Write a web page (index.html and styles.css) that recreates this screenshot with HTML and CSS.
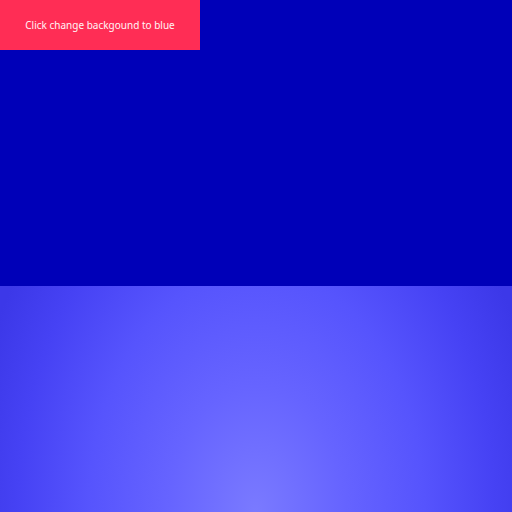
FILE: index.html
```html
<!DOCTYPE html>
<html>
<head>
<meta charset="utf-8">
<link rel="stylesheet" href="styles.css">
</head>
<body>
<div class="top">
  <button class="btn">Click change backgound to blue</button>
</div>
<div class="bottom"></div>
</body>
</html>
```
FILE: styles.css
```css
html, body {
  margin: 0;
  padding: 0;
  width: 512px;
  height: 512px;
  overflow: hidden;
}
body {
  display: flex;
  flex-direction: column;
  font-family: "Noto Sans", sans-serif;
}
.top {
  height: 286px;
  background: #0000b8;
  display: flex;
  align-items: flex-start;
}
.btn {
  width: 200px;
  height: 50px;
  border: none;
  margin: 0;
  padding: 0;
  background: #ff2d55;
  color: #fff4f6;
  font-family: "Noto Sans", sans-serif;
  font-size: 10px;
}
.bottom {
  flex: 1;
  background: radial-gradient(ellipse 290px 420px at 50% 100%, #7a7aff 0%, #6664ff 30%, #5654fd 58%, #4642f4 82%, #3c38e8 100%);
}
```
